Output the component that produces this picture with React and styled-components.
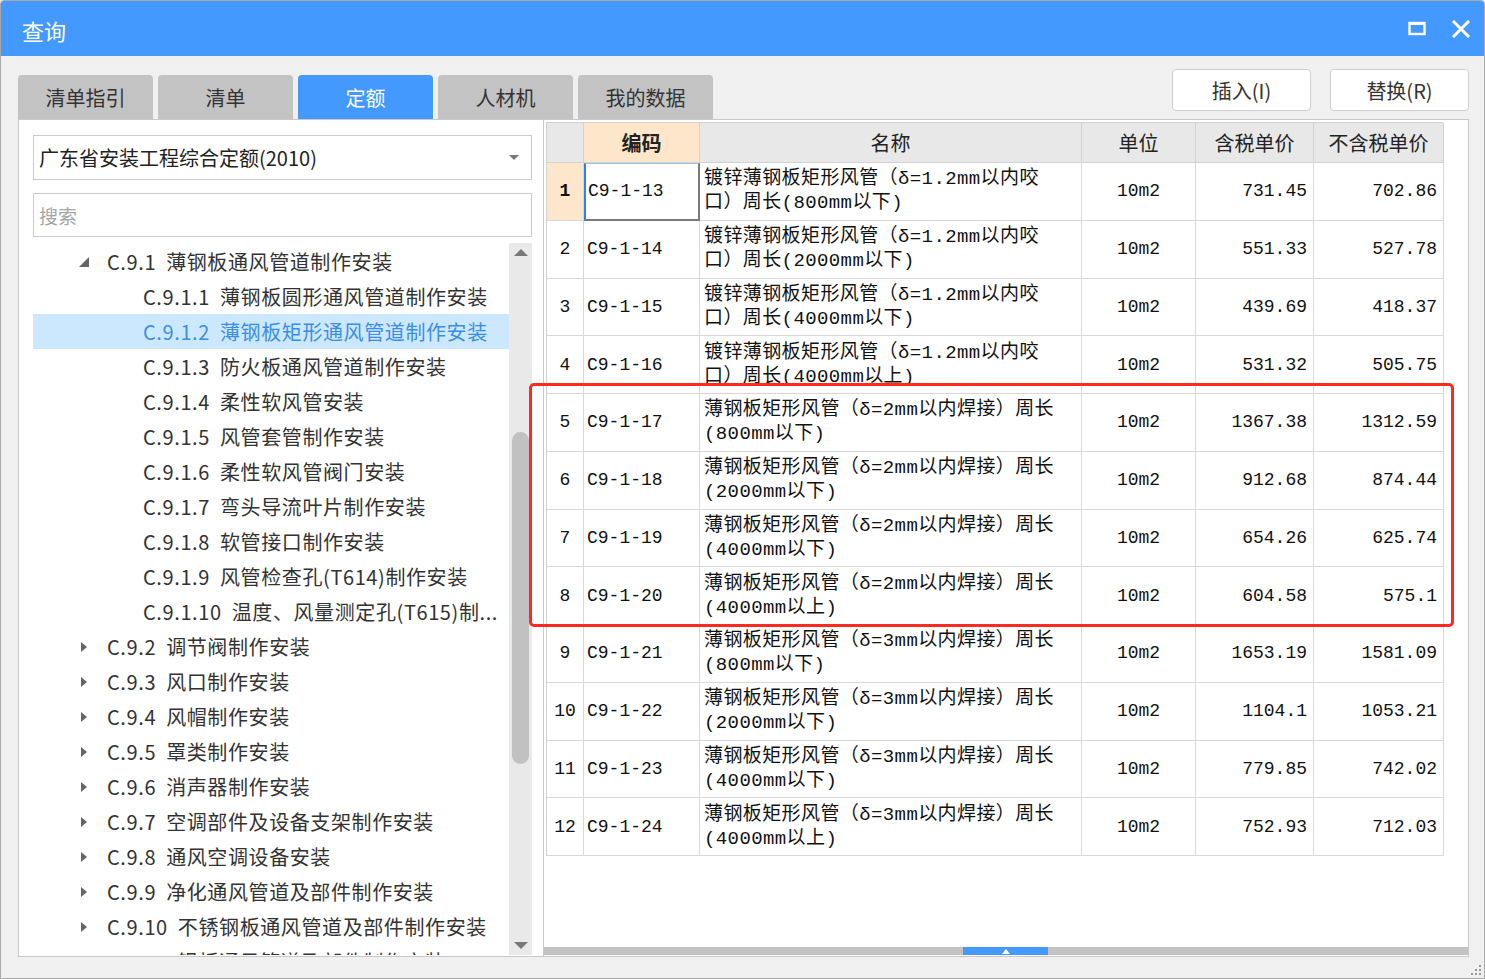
import styled, { createGlobalStyle } from "styled-components";

// styles
const GlobalStyle = createGlobalStyle`
    html, body {
        margin: 0;
        padding: 0;
        background: #f0f0f0;
    }
    body {
        font-family: "Noto Sans CJK SC", "Noto Sans", sans-serif;
        color: #333;
    }
`;

const Window = styled.div`
    position: relative;
    width: 1485px;
    height: 979px;
    box-sizing: border-box;
    border: 1px solid #a9a9a9;
    border-radius: 4px 4px 0 0;
    background: #f0f0f0;
    display: flex;
    flex-direction: column;
    overflow: hidden;
`;

const TitleBar = styled.div`
    height: 55px;
    flex-shrink: 0;
    background: #4499ff;
    display: flex;
    align-items: center;
    padding: 0 14px 0 21px;
    color: #fff;
    font-size: 22px;
`;

const Title = styled.span`
    margin-top: 3px;
`;

const WinControls = styled.div`
    margin-left: auto;
    display: flex;
    align-items: center;
    gap: 26px;
`;

const Body = styled.div`
    flex: 1;
    display: flex;
    flex-direction: column;
    padding: 0 15px 0 17px;
`;

const TopRow = styled.div`
    height: 63px;
    display: flex;
    justify-content: space-between;
`;

const Tabs = styled.div`
    align-self: flex-end;
    display: flex;
    gap: 5px;
`;

const Tab = styled.div`
    width: 135px;
    height: 44px;
    box-sizing: border-box;
    border-radius: 4px 4px 0 0;
    display: flex;
    align-items: center;
    justify-content: center;
    font-size: 20px;
    background: ${(p) => (p.$active ? "#4499ff" : "#c3c3c3")};
    color: ${(p) => (p.$active ? "#fff" : "#333")};
`;

const Actions = styled.div`
    display: flex;
    gap: 19px;
    margin-top: 13px;
`;

const ActionButton = styled.div`
    width: 139px;
    height: 42px;
    box-sizing: border-box;
    background: #fff;
    border: 1px solid #cfcfcf;
    border-radius: 4px;
    display: flex;
    align-items: center;
    justify-content: center;
    font-size: 20px;
    color: #333;
`;

const Content = styled.div`
    height: 838px;
    display: flex;
    flex-shrink: 0;
`;

const LeftPanel = styled.div`
    width: 525px;
    box-sizing: border-box;
    background: #fff;
    border: 1px solid #c9c9c9;
    border-right: none;
    padding: 15px 11px 0 14px;
    display: flex;
    flex-direction: column;
`;

const Select = styled.div`
    height: 45px;
    box-sizing: border-box;
    border: 1px solid #cbcbcb;
    display: flex;
    align-items: center;
    padding: 0 12px 0 5px;
    font-size: 20px;
    color: #222;
`;

const Caret = styled.span`
    margin-left: auto;
    width: 0;
    height: 0;
    border-left: 5px solid transparent;
    border-right: 5px solid transparent;
    border-top: 5px solid #777;
`;

const Search = styled.div`
    height: 44px;
    margin-top: 13px;
    box-sizing: border-box;
    border: 1px solid #cbcbcb;
    display: flex;
    align-items: center;
    padding: 0 5px;
    font-size: 19px;
    color: #a6a6a6;
`;

const TreeBox = styled.div`
    margin-top: 6px;
    height: 712px;
    display: flex;
    overflow: hidden;
`;

const TreeList = styled.div`
    flex: 1;
    padding-top: 1px;
    overflow: hidden;
`;

const TreeRow = styled.div`
    height: 35px;
    display: flex;
    align-items: center;
    padding-left: ${(p) => (p.$level === 1 ? 46 : 110)}px;
    font-size: 20px;
    letter-spacing: 0.6px;
    word-spacing: 5px;
    white-space: nowrap;
    background: ${(p) => (p.$selected ? "#cce8ff" : "transparent")};
    color: ${(p) => (p.$selected ? "#3b8ee8" : "#333")};
`;

const Toggle = styled.span`
    width: 28px;
    display: flex;
    align-items: center;
    flex-shrink: 0;
`;

const VScroll = styled.div`
    width: 23px;
    background: #e9e9e9;
    display: flex;
    flex-direction: column;
    align-items: center;
    justify-content: space-between;
    padding: 6px 0 6px;
    box-sizing: border-box;
`;

const VThumb = styled.div`
    width: 17px;
    height: 332px;
    margin-top: 176px;
    margin-bottom: auto;
    border-radius: 9px;
    background: #c1c1c1;
`;

const ArrowUp = styled.span`
    width: 0;
    height: 0;
    border-left: 7px solid transparent;
    border-right: 7px solid transparent;
    border-bottom: 7px solid #777;
`;

const ArrowDown = styled.span`
    width: 0;
    height: 0;
    border-left: 7px solid transparent;
    border-right: 7px solid transparent;
    border-top: 7px solid #777;
`;

const RightPanel = styled.div`
    flex: 1;
    box-sizing: border-box;
    background: #fff;
    border: 1px solid #c9c9c9;
    padding: 2px 0 0 2px;
    display: flex;
    flex-direction: column;
`;

const TableArea = styled.div`
    flex: 1;
`;

const Grid = styled.div`
    display: grid;
    grid-template-columns: 37px 116px 382px 114px 118px 130px;
    grid-template-rows: 40px repeat(12, 57.75px);
    width: 897px;
    box-sizing: border-box;
    border-left: 1px solid #d2d2d2;
    border-top: 1px solid #d2d2d2;
`;

const HeadCell = styled.div`
    box-sizing: border-box;
    border-right: 1px solid #d2d2d2;
    border-bottom: 1px solid #d2d2d2;
    background: ${(p) => (p.$hot ? "#fde6c9" : "#e8e8e8")};
    display: flex;
    align-items: center;
    justify-content: center;
    font-size: 20px;
    font-weight: ${(p) => (p.$hot ? 700 : 400)};
    color: #222;
`;

const Cell = styled.div`
    box-sizing: border-box;
    border-right: 1px solid #d8d8d8;
    border-bottom: 1px solid #d8d8d8;
    display: flex;
    align-items: center;
    justify-content: ${(p) => p.$align || "flex-start"};
    padding: ${(p) => (p.$align === "flex-end" ? "0 6px 0 0" : p.$align === "center" ? "0" : "0 0 0 3px")};
    font-family: "Liberation Mono", "Noto Sans CJK SC", monospace;
    font-size: 18px;
    color: #111;
    white-space: nowrap;
`;

const NumCell = styled(Cell)`
    justify-content: center;
    padding: 0;
    background: ${(p) => (p.$current ? "#fde6c9" : "#fff")};
    font-weight: ${(p) => (p.$current ? 700 : 400)};
`;

const CodeCell = styled(Cell)`
    ${(p) =>
        p.$focused &&
        `
        border-left: 2px solid #2a7fff;
        border-top: 1px solid #9cc4f5;
        border-right: 2px solid #7a7a7a;
        border-bottom: 2px solid #7a7a7a;
        padding-left: 2px;
    `}
`;

const NameCell = styled(Cell)`
    flex-direction: column;
    align-items: flex-start;
    justify-content: center;
    padding-left: 4px;
    font-size: 19px;
    letter-spacing: 0.4px;
    line-height: 24px;
`;

const HScroll = styled.div`
    height: 8px;
    margin: 0 0 1px -2px;
    background: #c3c3c3;
    display: flex;
`;

const HThumb = styled.div`
    width: 85px;
    margin-left: 419px;
    background: #4499ff;
    display: flex;
    justify-content: center;
    align-items: center;
`;

const ThumbMark = styled.span`
    width: 0;
    height: 0;
    border-left: 4px solid transparent;
    border-right: 4px solid transparent;
    border-bottom: 5px solid #fff;
`;

const Footer = styled.div`
    flex: 1;
    display: flex;
    justify-content: flex-end;
    align-items: flex-end;
    padding: 0 2px 2px 0;
    margin-right: -15px;
`;

const Highlight = styled.div`
    position: absolute;
    left: 528px;
    top: 382px;
    width: 925px;
    height: 244px;
    box-sizing: border-box;
    border: 3px solid #ff2a1f;
    border-radius: 5px;
    pointer-events: none;
`;

// data
const tabs = ["清单指引", "清单", "定额", "人材机", "我的数据"];

const tree = [
    { level: 1, open: true, text: "C.9.1 薄钢板通风管道制作安装" },
    { level: 2, text: "C.9.1.1 薄钢板圆形通风管道制作安装" },
    { level: 2, text: "C.9.1.2 薄钢板矩形通风管道制作安装", selected: true },
    { level: 2, text: "C.9.1.3 防火板通风管道制作安装" },
    { level: 2, text: "C.9.1.4 柔性软风管安装" },
    { level: 2, text: "C.9.1.5 风管套管制作安装" },
    { level: 2, text: "C.9.1.6 柔性软风管阀门安装" },
    { level: 2, text: "C.9.1.7 弯头导流叶片制作安装" },
    { level: 2, text: "C.9.1.8 软管接口制作安装" },
    { level: 2, text: "C.9.1.9 风管检查孔(T614)制作安装" },
    { level: 2, text: "C.9.1.10 温度、风量测定孔(T615)制..." },
    { level: 1, text: "C.9.2 调节阀制作安装" },
    { level: 1, text: "C.9.3 风口制作安装" },
    { level: 1, text: "C.9.4 风帽制作安装" },
    { level: 1, text: "C.9.5 罩类制作安装" },
    { level: 1, text: "C.9.6 消声器制作安装" },
    { level: 1, text: "C.9.7 空调部件及设备支架制作安装" },
    { level: 1, text: "C.9.8 通风空调设备安装" },
    { level: 1, text: "C.9.9 净化通风管道及部件制作安装" },
    { level: 1, text: "C.9.10 不锈钢板通风管道及部件制作安装" },
    { level: 1, text: "C.9.11 铝板通风管道及部件制作安装" },
];

const galv = (len) => ["镀锌薄钢板矩形风管（δ=1.2mm以内咬", `口）周长(${len})`];
const weld = (t, len) => [`薄钢板矩形风管（δ=${t}mm以内焊接）周长`, `(${len})`];

const rows = [
    ["C9-1-13", galv("800mm以下"), "731.45", "702.86"],
    ["C9-1-14", galv("2000mm以下"), "551.33", "527.78"],
    ["C9-1-15", galv("4000mm以下"), "439.69", "418.37"],
    ["C9-1-16", galv("4000mm以上"), "531.32", "505.75"],
    ["C9-1-17", weld(2, "800mm以下"), "1367.38", "1312.59"],
    ["C9-1-18", weld(2, "2000mm以下"), "912.68", "874.44"],
    ["C9-1-19", weld(2, "4000mm以下"), "654.26", "625.74"],
    ["C9-1-20", weld(2, "4000mm以上"), "604.58", "575.1"],
    ["C9-1-21", weld(3, "800mm以下"), "1653.19", "1581.09"],
    ["C9-1-22", weld(3, "2000mm以下"), "1104.1", "1053.21"],
    ["C9-1-23", weld(3, "4000mm以下"), "779.85", "742.02"],
    ["C9-1-24", weld(3, "4000mm以上"), "752.93", "712.03"],
];

// icons
const MaxIcon = () => (
    <svg width="18" height="16" viewBox="0 0 18 16">
        <rect x="1.5" y="2" width="15" height="11" fill="none" stroke="#fff" strokeWidth="2.4" />
        <rect x="1" y="1" width="16" height="3" fill="#fff" />
    </svg>
);

const CloseIcon = () => (
    <svg width="18" height="18" viewBox="0 0 18 18">
        <path d="M2 2 L16 16 M16 2 L2 16" stroke="#fff" strokeWidth="3" strokeLinecap="square" />
    </svg>
);

const Expanded = () => (
    <svg width="12" height="12" viewBox="0 0 12 12">
        <polygon points="10,1 10,11 0,11" fill="#666" />
    </svg>
);

const Collapsed = () => (
    <svg width="10" height="12" viewBox="0 0 10 12">
        <polygon points="2,1 8,6 2,11" fill="#666" />
    </svg>
);

const Grip = () => (
    <svg width="12" height="12" viewBox="0 0 12 12">
        {[
            [9, 1],
            [9, 5],
            [5, 5],
            [9, 9],
            [5, 9],
            [1, 9],
        ].map(([x, y]) => (
            <rect key={`${x}-${y}`} x={x} y={y} width="2" height="2" fill="#9a9a9a" />
        ))}
    </svg>
);

const Row = ({ index, code, name, tax, net }) => (
    <>
        <NumCell $current={index === 1}>{index}</NumCell>
        <CodeCell $focused={index === 1}>{code}</CodeCell>
        <NameCell>
            <span>{name[0]}</span>
            <span>{name[1]}</span>
        </NameCell>
        <Cell $align="center">10m2</Cell>
        <Cell $align="flex-end">{tax}</Cell>
        <Cell $align="flex-end">{net}</Cell>
    </>
);

// component
const App = () => {
    return (
        <>
            <GlobalStyle />
            <Window>
                <TitleBar>
                    <Title>查询</Title>
                    <WinControls>
                        <MaxIcon />
                        <CloseIcon />
                    </WinControls>
                </TitleBar>
                <Body>
                    <TopRow>
                        <Tabs>
                            {tabs.map((t) => (
                                <Tab key={t} $active={t === "定额"}>
                                    {t}
                                </Tab>
                            ))}
                        </Tabs>
                        <Actions>
                            <ActionButton>插入(I)</ActionButton>
                            <ActionButton>替换(R)</ActionButton>
                        </Actions>
                    </TopRow>
                    <Content>
                        <LeftPanel>
                            <Select>
                                广东省安装工程综合定额(2010)
                                <Caret />
                            </Select>
                            <Search>搜索</Search>
                            <TreeBox>
                                <TreeList>
                                    {tree.map((n) => (
                                        <TreeRow key={n.text} $level={n.level} $selected={n.selected}>
                                            {n.level === 1 && (
                                                <Toggle>{n.open ? <Expanded /> : <Collapsed />}</Toggle>
                                            )}
                                            {n.text}
                                        </TreeRow>
                                    ))}
                                </TreeList>
                                <VScroll>
                                    <ArrowUp />
                                    <VThumb />
                                    <ArrowDown />
                                </VScroll>
                            </TreeBox>
                        </LeftPanel>
                        <RightPanel>
                            <TableArea>
                                <Grid>
                                    <HeadCell />
                                    <HeadCell $hot>编码</HeadCell>
                                    <HeadCell>名称</HeadCell>
                                    <HeadCell>单位</HeadCell>
                                    <HeadCell>含税单价</HeadCell>
                                    <HeadCell>不含税单价</HeadCell>
                                    {rows.map(([code, name, tax, net], i) => (
                                        <Row
                                            key={code}
                                            index={i + 1}
                                            code={code}
                                            name={name}
                                            tax={tax}
                                            net={net}
                                        />
                                    ))}
                                </Grid>
                            </TableArea>
                            <HScroll>
                                <HThumb>
                                    <ThumbMark />
                                </HThumb>
                            </HScroll>
                        </RightPanel>
                    </Content>
                    <Footer>
                        <Grip />
                    </Footer>
                </Body>
                <Highlight />
            </Window>
        </>
    );
};

export default App;
